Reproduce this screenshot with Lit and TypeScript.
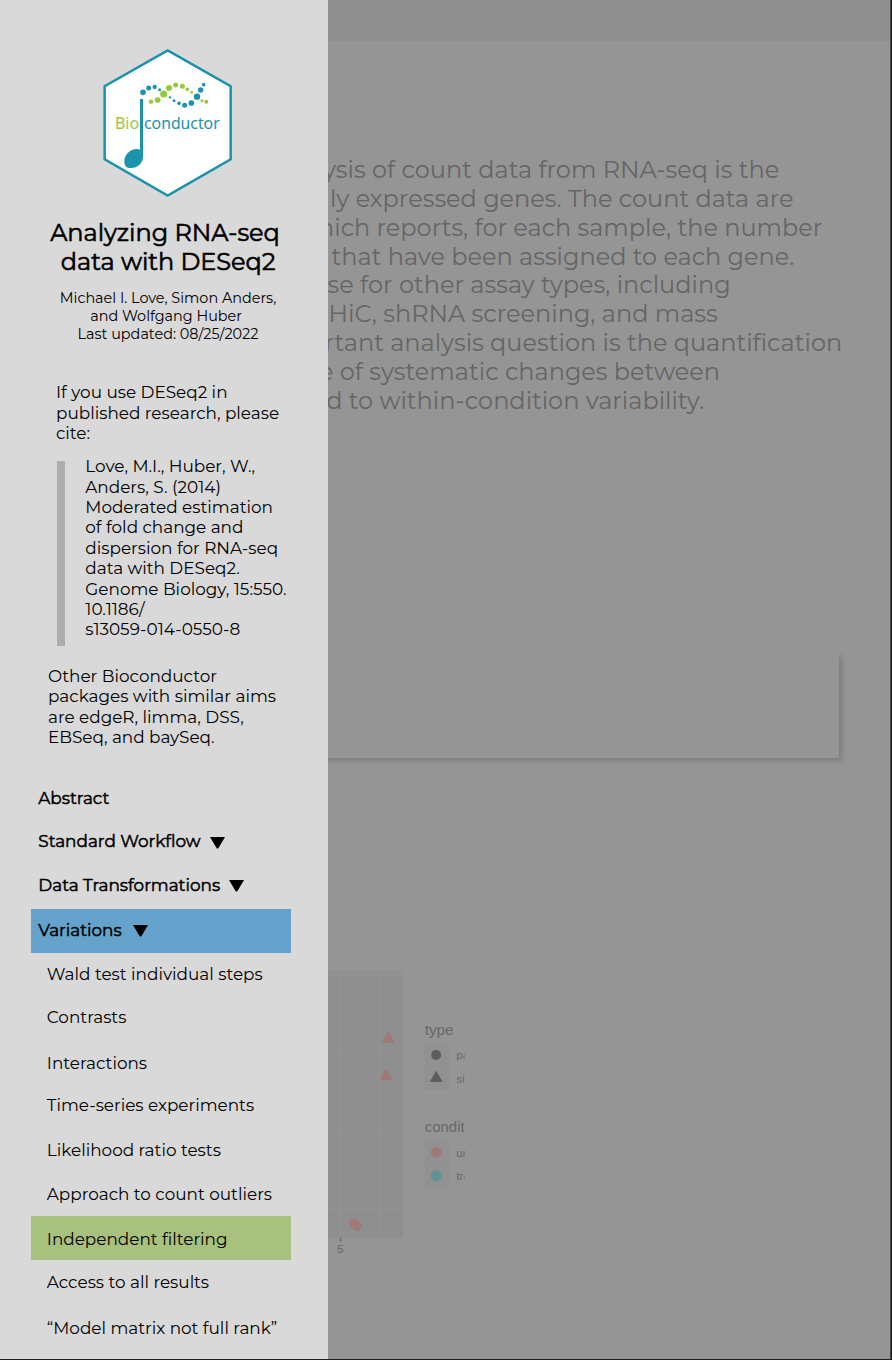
import { LitElement, html, svg, css } from "lit";
import { customElement } from "lit/decorators.js";
import { classMap } from "lit/directives/class-map.js";
import { styleMap } from "lit/directives/style-map.js";

type Line = [text: string, indent: number];

const lines = (items: Line[]) =>
  items.map(([t, x]) => html`<div class="line" style=${styleMap({ marginLeft: `${x}px` })}>${t}</div>`);

const ABSTRACT: Line[] = [
  ["ysis of count data from RNA-seq is the", -5],
  ["ly expressed genes. The count data are", 2],
  ["hich reports, for each sample, the number", -10],
  ["that have been assigned to each gene.", 3.5],
  ["se for other assay types, including", -0.5],
  ["HiC, shRNA screening, and mass", 0.5],
  ["rtant analysis question is the quantification", -3.5],
  ["e of systematic changes between", -9],
  ["d to within-condition variability.", -1.8],
];

interface Item { label: string; height: number; kind: "top" | "sub"; gap?: number; active?: string; lift?: number; }
const MENU: Item[] = [
  { label: "Abstract", height: 44, kind: "top" },
  { label: "Standard Workflow", height: 43, kind: "top", gap: 178.5 },
  { label: "Data Transformations", height: 46, kind: "top", gap: 197.5, lift: 1 },
  { label: "Variations", height: 44, kind: "top", gap: 101.5, active: "blue", lift: 1 },
  { label: "Wald test individual steps", height: 42, kind: "sub" },
  { label: "Contrasts", height: 44, kind: "sub" },
  { label: "Interactions", height: 46, kind: "sub", lift: -1 },
  { label: "Time-series experiments", height: 40, kind: "sub" },
  { label: "Likelihood ratio tests", height: 50, kind: "sub" },
  { label: "Approach to count outliers", height: 41, kind: "sub", lift: 1 },
  { label: "Independent filtering", height: 44, kind: "sub", active: "green", lift: -1 },
  { label: "Access to all results", height: 45, kind: "sub" },
  { label: "“Model matrix not full rank”", height: 46, kind: "sub" },
];

const TEAL_DOTS = [
  [159, 157, 8.5], [176, 144, 7.5], [194, 141, 6.5], [209, 149, 4.5], [240, 172, 3.5], [252, 182, 4.5],
  [267, 190, 5.5], [284, 196, 7.5], [304, 189, 8.5], [321, 170, 9.5], [332, 150, 8], [341, 134, 5.5],
];
const GREEN_DOTS = [
  [183, 185, 6.5], [203, 180, 8.5], [221, 162, 10.5], [237, 144, 9], [257, 135, 7.5], [277, 139, 7.5],
  [292, 148, 5.5], [305, 157, 4], [336, 182, 4.5], [349, 185, 6],
];

@customElement("bioc-logo")
class BiocLogo extends LitElement {
  static styles = css`
    :host { display: block; }
    svg { display: block; }
    .word { font: 48px "Open Sans", "Noto Sans", sans-serif; stroke-width: 0.4; }
    .word.teal { stroke: #1b93ac; }
    .word.green { stroke: #97c83c; }
    .teal { fill: #1b93ac; }
    .green { fill: #97c83c; }
    .hex { fill: #fff; stroke: #1b93ac; stroke-width: 7.5; }
  `;
  render() {
    return html`<svg width="160" height="165" viewBox="0 0 480 495">
      <path class="hex" d="M233 31 422 138.500V358L233 467 44 358V138.500Z" />
      ${TEAL_DOTS.map(([x, y, r]) => svg`<circle class="teal" cx=${x} cy=${y} r=${r} />`)}
      ${GREEN_DOTS.map(([x, y, r]) => svg`<circle class="green" cx=${x} cy=${y} r=${r} />`)}
      <path class="teal" d="M150 178q4.500-3 9 0V350C159 368 144 384 122 384C110 384 103 377 103 365C103 344 120 327 140 327Q146 327 150 329Z" />
      <text class="word green" x="75" y="267" textLength="72" lengthAdjust="spacingAndGlyphs">Bio</text>
      <text class="word teal" x="162" y="267" textLength="227" lengthAdjust="spacingAndGlyphs">conductor</text>
    </svg>`;
  }
}

@customElement("pca-plot")
class PcaPlot extends LitElement {
  static styles = css`
    :host { display: block; }
    svg { display: block; }
    .panel { fill: #8f8f8f; }
    .key { fill: #919191; }
    .grid { stroke: #959595; stroke-width: 3; fill: none; }
    .minor { stroke-width: 2; stroke: #939393; }
    .dark { fill: #5d5d5d; }
    .red { fill: #a07876; }
    .cyan { fill: #5f9294; }
    text { font-family: "Liberation Sans", Arial, sans-serif; fill: #686868; }
    .head { font-size: 44px; }
    .label { font-size: 35px; }
    .tick { stroke: #666; stroke-width: 4; }
  `;
  render() {
    return html`<svg width="162" height="300" viewBox="24 0 486 900">
      <defs><clipPath id="edge"><rect x="0" y="0" width="434" height="900" /></clipPath></defs>
      <rect class="panel" x="24" y="33" width="225" height="801" />
      <path class="grid" d="M24 45H249M24 278H249M24 512H249M24 745H249M61 33V834M179 33V834" />
      <path class="grid minor" d="M24 162H249M24 395H249M24 628H249" />
      <path class="red" d="M205 213 225 248H186ZM198 326 218 360H179Z" />
      <circle class="red" cx="101" cy="790" r="14" />
      <circle class="red" cx="111" cy="798" r="14" />
      <path class="tick" d="M61.500 834V845" />
      <text class="label" x="51" y="879">5</text>
      <rect class="key" x="314" y="251" width="73" height="139" />
      <rect class="key" x="314" y="542" width="73" height="141" />
      <circle class="dark" cx="348.500" cy="285" r="15" />
      <path class="dark" d="M348.500 332 368 366H329Z" />
      <circle class="red" cx="348.500" cy="577" r="16" />
      <circle class="cyan" cx="348.500" cy="647" r="16" />
      <g clip-path="url(#edge)">
        <text class="head" x="314" y="224" textLength="87" lengthAdjust="spacingAndGlyphs">type</text>
        <text class="label" x="409" y="298">pa</text>
        <text class="label" x="409" y="368">si</text>
        <text class="head" x="314" y="516" textLength="120" lengthAdjust="spacingAndGlyphs">condit</text>
        <text class="label" x="409" y="591">un</text>
        <text class="label" x="409" y="660">tre</text>
      </g>
    </svg>`;
  }
}

@customElement("app-root")
class AppRoot extends LitElement {
  static styles = css`
    :host {
      display: grid;
      grid-template-columns: 328px 1fr;
      box-sizing: border-box;
      width: 892px;
      height: 1360px;
      overflow: hidden;
      border-right: 1px solid #1f1b1c;
      border-bottom: 1px solid #231f20;
      background: #959595;
      color: #000;
      font-family: Montserrat, Inter, sans-serif;
      white-space: nowrap;
    }
    .side { background: #d9d9d9; height: 1359px; overflow: hidden; }
    .logo { margin: 40px 0 0 90px; }
    .title { margin: 14px 0 0; padding-left: 2px; font-size: 24px; line-height: 28.8px; font-weight: 400; -webkit-text-stroke: 0.6px #000; width: 326px; text-align: center; }
    .authors { margin: 12px 0 0; width: 336px; font-size: 14.400px; line-height: 18px; text-align: center; }
    .copy { font-size: 16.850px; line-height: 20.4px; }
    .cite { margin: 39.500px 0 0 56px; }
    .quote { margin: 12.800px 0 0 57px; display: flex; align-items: flex-start; height: 190px; gap: 20.300px; }
    .bar { width: 8px; height: 185px; margin-top: 4.800px; background: #adadad; }
    .others { margin: 19.700px 0 0 48px; }
    .menu { margin: 28.500px 0 0 31.300px; width: 259.500px; font-size: 16.850px; line-height: 20px; }
    .item { display: flex; align-items: center; box-sizing: border-box; }
    .row { display: grid; width: 100%; align-items: center; }
    .row > * { grid-area: 1 / 1; }
    .top { padding-left: 7px; -webkit-text-stroke: 0.5px #000; }
    .sub { padding-left: 15.500px; }
    .blue { background: #65a3cc; }
    .green { background: #a8c17e; }
    .arrow { display: block; margin-top: 3px; }
    .main { overflow: hidden; border-right: 1px solid #484848; }
    .header { height: 41px; background: #8f8f8f; }
    .abstract { margin: 115.300px 0 0; font-size: 24px; line-height: 28.8px; color: #656565; }
    .card { width: 521.300px; height: 105px; margin: 237.200px 0 0 -10px; background: #959595; box-shadow: 3px 3px 5px rgba(0, 0, 0, 0.16); }
    .plot { margin-top: 202.300px; }
  `;

  private item(i: Item) {
    const lift = (i.lift ?? 0) * 2;
    return html`<div
      class=${classMap({ item: true, [i.kind]: true, blue: i.active === "blue", green: i.active === "green" })}
      style=${styleMap({
        height: `${i.height}px`,
        paddingBottom: `${Math.max(lift, 0)}px`,
        paddingTop: `${Math.max(-lift, 0)}px`,
      })}
    >
      <div class="row">
        <span>${i.label}</span>
        ${i.gap
          ? html`<svg class="arrow" style=${styleMap({ marginLeft: `${i.gap - 6.5}px` })} width="15" height="12" viewBox="0 0 15 12"><path d="M0 0H15L8.500 11Q7.500 12 6.500 11Z" /></svg>`
          : null}
      </div>
    </div>`;
  }

  render() {
    return html`
      <aside class="side">
        <bioc-logo class="logo"></bioc-logo>
        <h1 class="title">Analyzing RNA-seq<br />&nbsp;data with DESeq2</h1>
        <div class="authors">Michael I. Love, Simon Anders,<br />and Wolfgang Huber&nbsp;<br />Last updated: 08/25/2022</div>
        <div class="copy cite">If you use DESeq2 in<br />published research, please<br />cite:</div>
        <div class="copy quote">
          <div class="bar"></div>
          <div>
            Love, M.I., Huber, W.,<br />Anders, S. (2014)<br />Moderated estimation<br />of fold change and<br />dispersion for RNA-seq<br />data with DESeq2.<br />Genome Biology, 15:550.<br />10.1186/<br />s13059-014-0550-8
          </div>
        </div>
        <div class="copy others">Other Bioconductor<br />packages with similar aims<br />are edgeR, limma, DSS,<br />EBSeq, and baySeq.</div>
        <nav class="menu">${MENU.map((i) => this.item(i))}</nav>
      </aside>
      <main class="main">
        <div class="header"></div>
        <div class="abstract">${lines(ABSTRACT)}</div>
        <div class="card"></div>
        <pca-plot class="plot"></pca-plot>
      </main>
    `;
  }
}
